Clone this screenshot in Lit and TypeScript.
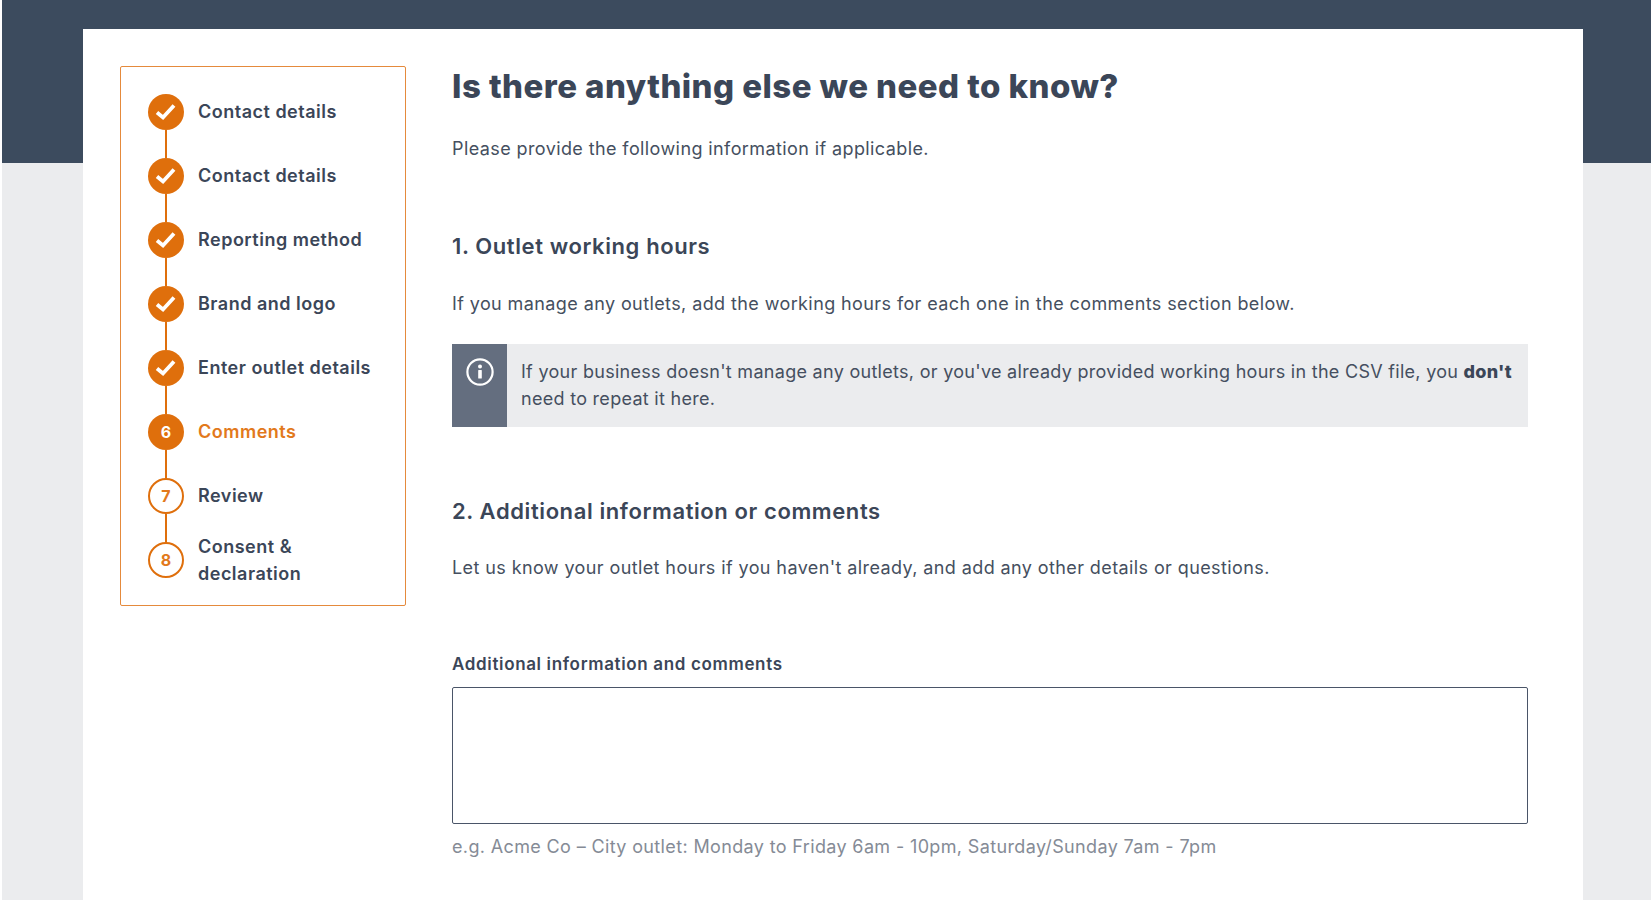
import { LitElement, html, css, svg } from 'lit';
import { customElement } from 'lit/decorators.js';

type Step = { label: string; state: 'done' | 'current' | 'todo'; num: number };

const STEPS: Step[] = [
  { label: 'Contact details', state: 'done', num: 1 },
  { label: 'Contact details', state: 'done', num: 2 },
  { label: 'Reporting method', state: 'done', num: 3 },
  { label: 'Brand and logo', state: 'done', num: 4 },
  { label: 'Enter outlet details', state: 'done', num: 5 },
  { label: 'Comments', state: 'current', num: 6 },
  { label: 'Review', state: 'todo', num: 7 },
  { label: 'Consent & declaration', state: 'todo', num: 8 },
];

const checkIcon = svg`<path d="M9 18.5L15 23.5L26 11.5" fill="none" stroke="#fff" stroke-width="3.8"/>`;

@customElement('app-root')
export class AppRoot extends LitElement {
  static styles = css`
    :host {
      display: block;
      height: 900px;
      overflow: hidden;
      background: #ebecee;
      font-family: Inter, 'Liberation Sans', sans-serif;
      color: #3b4658;
      border-left: 2px solid #fff;
      box-sizing: border-box;
    }

    .band {
      height: 163px;
      background: #3c4b5e;
    }

    .card {
      width: 1500px;
      height: 871px;
      margin: -134px 0 0 81px;
      padding: 37px 55px 0 37px;
      box-sizing: border-box;
      background: #fff;
      display: flex;
      align-items: flex-start;
      gap: 46px;
    }

    .steps {
      flex: none;
      width: 286px;
      height: 540px;
      box-sizing: border-box;
      padding: 13px 27px 0;
      border: 1px solid #e58a3c;
      border-radius: 2px;
      list-style: none;
      margin: 0;
    }

    .step {
      position: relative;
      height: 64px;
      display: flex;
      align-items: center;
      gap: 14px;
      font-size: 18px;
      line-height: 27px;
      font-weight: 600;
      letter-spacing: 0.5px;
    }

    .step:not(:last-child)::after {
      content: '';
      position: absolute;
      left: 17px;
      top: 50px;
      width: 2px;
      height: 28px;
      background: #df6f0c;
    }

    .name {
      padding-bottom: 1px;
    }

    .dot {
      flex: none;
      width: 36px;
      height: 36px;
      box-sizing: border-box;
      border-radius: 50%;
      display: flex;
      align-items: center;
      justify-content: center;
      background: #df6f0c;
      color: #fff;
      font-size: 16px;
      font-weight: 700;
      letter-spacing: 0;
    }

    .dot svg {
      width: 36px;
      height: 36px;
      display: block;
    }

    .todo .dot {
      background: #fff;
      border: 2px solid #df6f0c;
      color: #e2791c;
    }

    .current .name {
      color: #e2791c;
    }

    .main {
      flex: 1;
      min-width: 0;
    }

    h1 {
      margin: 0;
      font-size: 33px;
      line-height: 40px;
      font-weight: 800;
      letter-spacing: 0.45px;
    }

    p {
      margin: 0;
      font-size: 18px;
      line-height: 27px;
      font-weight: 400;
      letter-spacing: 0.4px;
      color: #454f60;
    }

    .lead {
      margin-top: 29px;
    }

    h2 {
      margin: 0;
      font-size: 22px;
      line-height: 30px;
      font-weight: 600;
      letter-spacing: 0.6px;
    }

    .first {
      margin-top: 69px;
    }

    .sub {
      margin-top: 29px;
    }

    .second + .sub {
      margin-top: 28px;
    }

    .note {
      margin-top: 27px;
      display: flex;
      min-height: 83px;
      background: #ebecee;
    }

    .note-icon {
      flex: none;
      width: 55px;
      background: #646e7f;
      display: flex;
      justify-content: center;
      align-items: flex-start;
      padding-top: 14px;
      box-sizing: border-box;
    }

    .note-icon svg {
      width: 28px;
      height: 28px;
      display: block;
    }

    .note-text {
      padding: 14px 8px 0 14px;
      letter-spacing: 0.29px;
    }

    .note-text b {
      font-weight: 800;
      color: #3b4658;
    }

    .second {
      margin-top: 69px;
    }

    .field {
      margin-top: 71px;
    }

    label {
      display: block;
      font-size: 17px;
      line-height: 24px;
      font-weight: 600;
      letter-spacing: 0.65px;
    }

    textarea {
      display: block;
      width: 100%;
      height: 137px;
      margin-top: 11px;
      box-sizing: border-box;
      border: 1px solid #4a5568;
      border-radius: 2px;
      background: #fff;
      resize: none;
      outline: none;
    }

    .hint {
      margin-top: 9px;
      color: #858b96;
      letter-spacing: 0.36px;
    }
  `;

  private renderDot(step: Step) {
    if (step.state === 'done') {
      return html`<span class="dot"><svg viewBox="0 0 36 36">${checkIcon}</svg></span>`;
    }
    return html`<span class="dot">${step.num}</span>`;
  }

  render() {
    return html`
      <div class="band"></div>
      <div class="card">
        <ol class="steps">
          ${STEPS.map(
            (s) => html`
              <li class="step ${s.state}">
                ${this.renderDot(s)}
                <span class="name">${s.label}</span>
              </li>
            `
          )}
        </ol>
        <div class="main">
          <h1>Is there anything else we need to know?</h1>
          <p class="lead">Please provide the following information if applicable.</p>

          <h2 class="first">1. Outlet working hours</h2>
          <p class="sub">If you manage any outlets, add the working hours for each one in the comments section below.</p>

          <div class="note">
            <div class="note-icon">
              <svg viewBox="0 0 28 28">
                <circle cx="14" cy="14" r="12.6" fill="none" stroke="#fff" stroke-width="2.2"/>
                <circle cx="14" cy="8.6" r="2" fill="#fff"/>
                <rect x="12.2" y="12" width="3.6" height="8.6" rx="0.6" fill="#fff"/>
              </svg>
            </div>
            <p class="note-text">If your business doesn't manage any outlets, or you've already provided working hours in the CSV file, you <b>don't</b> need to repeat it here.</p>
          </div>

          <h2 class="second">2. Additional information or comments</h2>
          <p class="sub">Let us know your outlet hours if you haven't already, and add any other details or questions.</p>

          <div class="field">
            <label for="comments">Additional information and comments</label>
            <textarea id="comments"></textarea>
            <p class="hint">e.g. Acme Co – City outlet: Monday to Friday 6am - 10pm, Saturday/Sunday 7am - 7pm</p>
          </div>
        </div>
      </div>
    `;
  }
}
